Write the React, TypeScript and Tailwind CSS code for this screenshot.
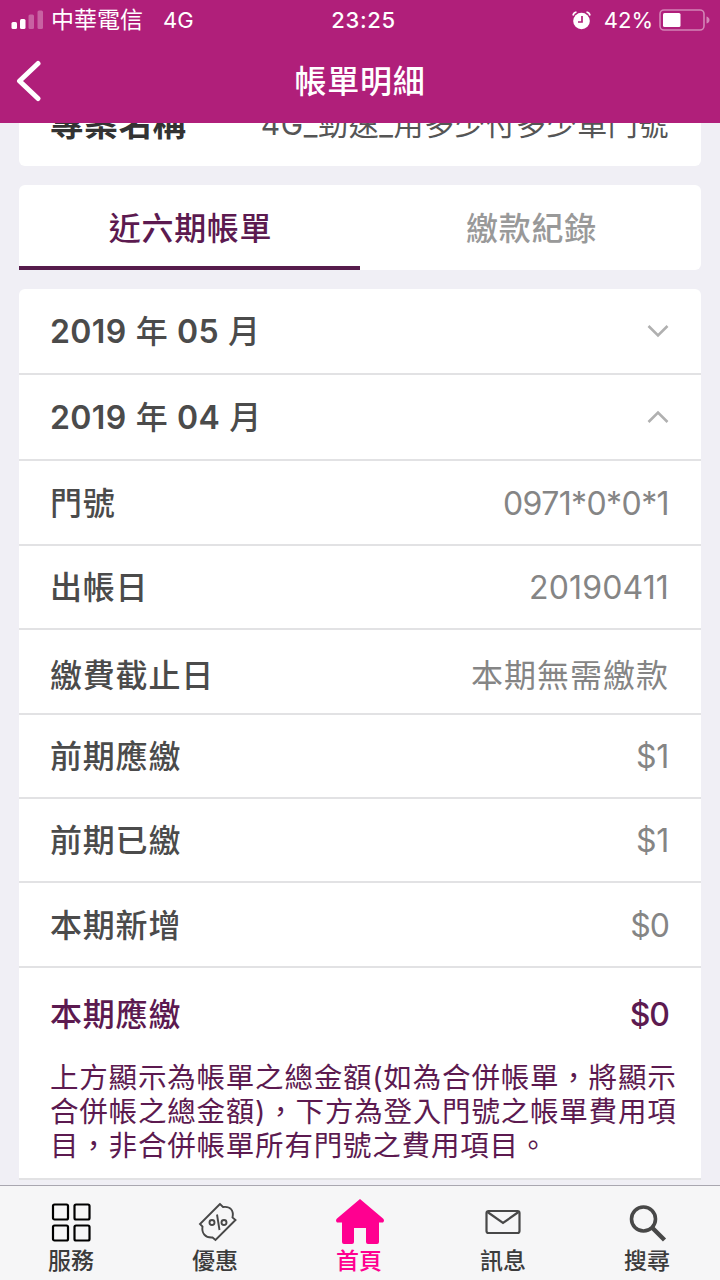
import type {ReactNode} from 'react';

type Row = {
	label: string;
	value: string;
	className: string;
	valueClassName?: string;
};

const rows: Row[] = [
	{label: '門號', value: '0971*0*0*1', className: 'h-[85px] pt-0.5', valueClassName: 'tracking-[-0.6px]'},
	{label: '出帳日', value: '20190411', className: 'h-[84px] pt-0.5', valueClassName: 'tracking-[0.15px]'},
	{label: '繳費截止日', value: '本期無需繳款', className: 'h-[85px] pt-2', valueClassName: 'tracking-[1px]'},
	{label: '前期應繳', value: '$1', className: 'h-[84px] pt-0.5', valueClassName: 'tracking-[-0.3px]'},
	{label: '前期已繳', value: '$1', className: 'h-[84px] pt-0.5', valueClassName: 'tracking-[-0.3px]'},
	{label: '本期新增', value: '$0', className: 'h-[85px] pt-0.5', valueClassName: 'tracking-[-1px]'},
];

const noteLines = [
	'上方顯示為帳單之總金額(如為合併帳單，將顯示',
	'合併帳之總金額)，下方為登入門號之帳單費用項',
	'目，非合併帳單所有門號之費用項目。',
];

function StatusBar() {
	return (
		<div className="grid h-10 grid-cols-3 items-center text-[22px] leading-none">
			<div className="flex items-center pl-[11px]">
				<svg width="33" height="20" viewBox="0 0 33 20" fill="currentColor">
					<rect x="0.5" y="12" width="5.5" height="7" rx="1.5" />
					<rect x="9" y="9" width="5.5" height="10" rx="1.5" />
					<rect x="17.5" y="4.5" width="5.5" height="14.5" rx="1.5" opacity=".3" />
					<rect x="26.5" y="0.5" width="5.5" height="18.5" rx="1.5" opacity=".3" />
				</svg>
				<span className="ml-[7px] text-[23px]">中華電信</span>
				<span className="ml-5">4G</span>
			</div>
			<div className="pl-[7px] text-center font-medium tracking-[0.7px]">23:25</div>
			<div className="flex items-center justify-end pr-2.5">
				<svg width="19" height="19" viewBox="0 0 19 19" fill="none">
					<circle cx="9.5" cy="10" r="8.3" fill="currentColor" />
					<path d="M1 4.5Q1.5 1.5 4.5 1M18 4.5Q17.5 1.5 14.5 1" stroke="currentColor" strokeWidth="1.6" />
					<path d="M10 5v6H6" stroke="#b01f7a" strokeWidth="1.7" />
				</svg>
				<span className="ml-[13px]">42%</span>
				<svg className="ml-1.5" width="51" height="22" viewBox="0 0 51 22" fill="none">
					<rect x="1" y="1" width="44" height="20" rx="4" stroke="currentColor" strokeOpacity=".45" strokeWidth="1.6" />
					<rect x="4" y="4" width="17.5" height="14" rx="1.5" fill="currentColor" />
					<path d="M47.5 7.5q3 1 3 3.5t-3 3.5z" fill="currentColor" fillOpacity=".45" />
				</svg>
			</div>
		</div>
	);
}

function Header() {
	return (
		<header className="h-[123px] shrink-0 bg-[#b01f7a] text-white">
			<StatusBar />
			<div className="grid h-[81px] grid-cols-3 items-center">
				<svg className="ml-[15px]" width="26" height="42" viewBox="0 0 26 42" fill="none">
					<path d="M23 3.5 4.5 21 23 38.5" stroke="currentColor" strokeWidth="5" strokeLinecap="round" strokeLinejoin="round" />
				</svg>
				<h1 className="pt-0.5 text-center text-[32px] font-medium tracking-[0.7px]">帳單明細</h1>
			</div>
		</header>
	);
}

function Chevron({up = false}: {up?: boolean}) {
	return (
		<svg width="22" height="14" viewBox="0 0 22 14" fill="none" stroke="#b0b0b0" strokeWidth="2.6">
			<path d={up ? 'M1.5 12 11 2.5l9.5 9.5' : 'M1.5 2 11 11.5 20.5 2'} />
		</svg>
	);
}

function Month({year, month, open}: {year: string; month: string; open?: boolean}) {
	return (
		<div className="flex h-[86px] items-center justify-between border-b-2 border-[#e2e2e4] pl-[31px] pr-8">
			<span className="flex items-center gap-[9px] pt-0.5 text-[32px] font-semibold tracking-[0.4px] text-[#4b4b4b]">
				{year}
				<span className="font-medium">年</span>
				{month}
				<span className="font-medium">月</span>
			</span>
			<Chevron up={open} />
		</div>
	);
}

function Tab({label, active, children}: {label: string; active?: boolean; children: ReactNode}) {
	return (
		<div className={`flex w-36 flex-col items-center text-[23px] leading-7 ${active ? 'text-[#ff0090]' : 'text-[#3c3c3c]'}`}>
			<div className="flex h-[51px] items-center justify-center">{children}</div>
			<span className="pr-0.5 font-medium">{label}</span>
		</div>
	);
}

function TabBar() {
	return (
		<nav className="flex h-[95px] shrink-0 border-t border-[#a9a7b0] bg-[#f6f6f7] pt-2.5">
			<Tab label="服務">
				<svg className="mr-[3px] mt-0.5" width="40" height="40" viewBox="0 0 40 40" fill="none" stroke="#000" strokeWidth="2.2">
					<rect x="2" y="1.5" width="15" height="15" rx="1.5" />
					<rect x="23.5" y="1.5" width="15" height="15" rx="1.5" />
					<rect x="2" y="22.5" width="15" height="15" rx="1.5" />
					<rect x="23.5" y="22.5" width="15" height="15" rx="1.5" />
				</svg>
			</Tab>
			<Tab label="優惠">
				<svg className="ml-[3px]" width="40" height="40" viewBox="0 0 40 40" fill="none" stroke="#484848" strokeWidth="1.9">
					<path d="M22 2 2 22l2.500 2.500C3.500 31 7 36 14.500 35.500L17.500 38 37.500 18 34.500 15.500C36 8.500 32.500 4 25 5Z" />
					<path d="m19 12.5 2.5 15.5" />
					<circle cx="14" cy="20.5" r="2.5" />
					<circle cx="26" cy="20.5" r="2.500" />
				</svg>
			</Tab>
			<Tab label="首頁" active>
				<svg width="50" height="48" viewBox="0 0 50 48" fill="currentColor">
					<path d="M25 1 48 20.5q2 2 0 4h-4V44q0 2-2 2h-9q-2 0-2-2V30H19v14q0 2-2 2H9q-2 0-2-2V24.5H2q-2-2 0-4Z" />
				</svg>
			</Tab>
			<Tab label="訊息">
				<svg className="mr-[3px]" width="36" height="26" viewBox="0 0 36 26" fill="none" stroke="#484848" strokeWidth="2.2">
					<rect x="1.5" y="2" width="33" height="22" rx="2" />
					<path d="M2.5 3 18 14 33.5 3" />
				</svg>
			</Tab>
			<Tab label="搜尋">
				<svg className="mt-0.5" width="38" height="38" viewBox="0 0 38 38" fill="none" stroke="#484848">
					<circle cx="14.5" cy="15" r="12" strokeWidth="3.6" />
					<path d="m23.5 24 12 12" strokeWidth="4.4" />
				</svg>
			</Tab>
		</nav>
	);
}

export default function App() {
	return (
		<div lang="zh-Hant" className="flex h-[1280px] w-[720px] flex-col overflow-hidden bg-[#f0eff5] font-['Inter','Noto_Sans_CJK_TC',sans-serif]">
			<Header />
			<main className="flex min-h-0 flex-1 flex-col overflow-hidden px-[19px]">
				{/* scrolled halfway under the header */}
				<section className="flex h-[43px] shrink-0 items-end justify-between overflow-hidden rounded-b-md bg-white pb-6 pl-[31px] pr-8 leading-[36px]">
					<span className="text-[33.5px] font-bold tracking-[0.7px] text-[#333]">專案名稱</span>
					<span className="text-[30px] tracking-[0.6px] text-[#555]">4G_勁速_用多少付多少單門號</span>
				</section>

				<section className="mt-[19px] grid h-[85px] shrink-0 grid-cols-2 rounded-md bg-white text-center text-[32px] font-medium tracking-[0.7px]">
					<div className="flex items-center justify-center border-b-4 border-[#561c4c] pl-0.5 pt-1.5 text-[#5c1a50]">近六期帳單</div>
					<div className="flex items-center justify-center pl-0.5 pt-0.5 text-[#999]">繳款紀錄</div>
				</section>

				<section className="mt-[19px] shrink-0 rounded-t-md bg-white">
					<Month year="2019" month="05" />
					<Month year="2019" month="04" open />
					{rows.map(row => (
						<div key={row.label} className={`flex items-center justify-between border-b-2 border-[#e2e2e4] pl-[31px] pr-8 text-[32px] ${row.className}`}>
							<span className="font-medium tracking-[0.8px] text-[#4b4b4b]">{row.label}</span>
							<span className={`text-[#858585] ${row.valueClassName ?? ''}`}>{row.value}</span>
						</div>
					))}
					<div className="h-[212px] border-b-2 border-[#e2e2e4] pl-[31px] pr-8 pt-[23px] text-[#5c1a50]">
						<div className="flex items-center justify-between text-[32px] font-medium tracking-[0.8px]">
							<span>本期應繳</span>
							<span className="tracking-[-1px]">$0</span>
						</div>
						<p className="mt-[22px] whitespace-nowrap text-[28.5px] leading-[34px] tracking-[0.8px]">
							{noteLines.map(line => (
								<span key={line} className="block">{line}</span>
							))}
						</p>
					</div>
				</section>
			</main>
			<TabBar />
		</div>
	);
}
